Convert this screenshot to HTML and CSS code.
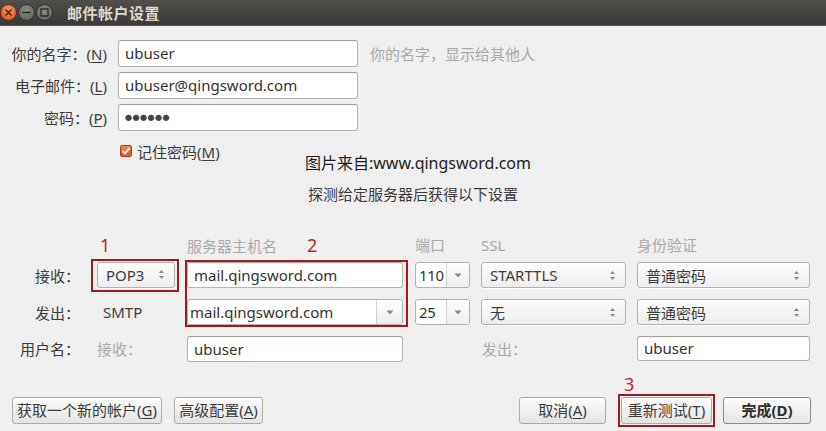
FILE: index.html
```html
<!DOCTYPE html>
<html lang="zh-CN">
<head>
<meta charset="utf-8">
<title>邮件帐户设置</title>
<link rel="stylesheet" href="styles.css">
</head>
<body>
<div class="titlebar">
  <div class="wbtns">
    <span class="wbtn close"><svg width="17" height="17" viewBox="0 0 17 17"><path d="M6 6 L11 11 M11 6 L6 11" stroke="#5a1d0b" stroke-width="1.6" stroke-linecap="round"/></svg></span>
    <span class="wbtn"><svg width="17" height="17" viewBox="0 0 17 17"><path d="M4.5 8.5 H12.5" stroke="#2d2d2a" stroke-width="1.6"/></svg></span>
    <span class="wbtn"><svg width="17" height="17" viewBox="0 0 17 17"><rect x="5" y="5" width="7" height="7" fill="none" stroke="#2d2d2a" stroke-width="1.4"/></svg></span>
  </div>
  <div class="wtitle">邮件帐户设置</div>
</div>

<div class="form">
  <div class="flabel">你的名字：(<u>N</u>)</div>
  <div class="entry">ubuser</div>
  <div class="hint">你的名字，显示给其他人</div>

  <div class="flabel">电子邮件：(<u>L</u>)</div>
  <div class="entry">ubuser@qingsword.com</div>
  <div></div>

  <div class="flabel">密码：(<u>P</u>)</div>
  <div class="entry pw">●●●●●●</div>
  <div></div>
</div>

<div class="mid">
  <div class="check">
    <svg class="cbox" width="12" height="12" viewBox="0 0 12 12">
      <defs><linearGradient id="cg" x1="0" y1="0" x2="0" y2="1"><stop offset="0" stop-color="#f2905a"/><stop offset="1" stop-color="#d6521f"/></linearGradient></defs>
      <rect x="0.5" y="0.5" width="11" height="11" rx="1.5" fill="url(#cg)" stroke="#a9401a"/>
      <path d="M2.8 6.2 L5 8.5 L9.4 3.2" fill="none" stroke="#fff" stroke-width="1.7"/>
    </svg>
    <span>记住密码(<u>M</u>)</span>
  </div>
  <div class="center">
    <div class="mark">图片来自:www.qingsword.com</div>
    <div class="probe">探测给定服务器后获得以下设置</div>
  </div>
  <div></div>
</div>

<div class="server">
  <div></div>
  <div class="ann a1">1</div>
  <div class="colhead">服务器主机名<span class="ann a2">2</span></div>
  <div class="colhead">端口</div>
  <div class="colhead">SSL</div>
  <div class="colhead">身份验证</div>

  <div class="rlabel">接收：</div>
  <div class="redbox r1"><div class="select pop"><span>POP3</span><svg class="updn" width="7" height="11" viewBox="0 0 7 11"><path d="M1 4 L3.5 1 L6 4 Z M1 7 L3.5 10 L6 7 Z" fill="#8a8a8a"/></svg></div></div>
  <div class="entry host h1">mail.qingsword.com</div>
  <div class="combo port"><span class="ctext">110</span><span class="cbtn"><svg width="8" height="5" viewBox="0 0 8 5"><path d="M0.5 0.5 L7.5 0.5 L4 4.5 Z" fill="#8a8a8a"/></svg></span></div>
  <div class="select ssl"><span>STARTTLS</span><svg class="updn" width="7" height="11" viewBox="0 0 7 11"><path d="M1 4 L3.5 1 L6 4 Z M1 7 L3.5 10 L6 7 Z" fill="#8a8a8a"/></svg></div>
  <div class="select auth"><span>普通密码</span><svg class="updn" width="7" height="11" viewBox="0 0 7 11"><path d="M1 4 L3.5 1 L6 4 Z M1 7 L3.5 10 L6 7 Z" fill="#8a8a8a"/></svg></div>

  <div class="rlabel">发出：</div>
  <div class="plain">SMTP</div>
  <div class="combo host h2"><span class="ctext">mail.qingsword.com</span><span class="cbtn"><svg width="8" height="5" viewBox="0 0 8 5"><path d="M0.5 0.5 L7.5 0.5 L4 4.5 Z" fill="#8a8a8a"/></svg></span></div>
  <div class="combo port"><span class="ctext">25</span><span class="cbtn"><svg width="8" height="5" viewBox="0 0 8 5"><path d="M0.5 0.5 L7.5 0.5 L4 4.5 Z" fill="#8a8a8a"/></svg></span></div>
  <div class="select ssl"><span>无</span><svg class="updn" width="7" height="11" viewBox="0 0 7 11"><path d="M1 4 L3.5 1 L6 4 Z M1 7 L3.5 10 L6 7 Z" fill="#8a8a8a"/></svg></div>
  <div class="select auth"><span>普通密码</span><svg class="updn" width="7" height="11" viewBox="0 0 7 11"><path d="M1 4 L3.5 1 L6 4 Z M1 7 L3.5 10 L6 7 Z" fill="#8a8a8a"/></svg></div>

  <div class="rlabel">用户名：</div>
  <div class="dim d1">接收：</div>
  <div class="entry host h3">ubuser</div>
  <div></div>
  <div class="dim d2">发出：</div>
  <div class="entry auth">ubuser</div>

  <div class="box2"></div>
</div>

<div class="actions">
  <div class="left">
    <div class="btn b-get">获取一个新的帐户(<u>G</u>)</div>
    <div class="btn b-adv">高级配置(<u>A</u>)</div>
  </div>
  <div class="right">
    <div class="btn b-cancel">取消(<u>A</u>)</div>
    <div class="redbox r3"><span class="ann a3">3</span><div class="btn b-retest">重新测试(<u>T</u>)</div></div>
    <div class="btn b-done">完成(<u>D</u>)</div>
  </div>
</div>
</body>
</html>
```

FILE: styles.css
```css
* { box-sizing: border-box; }
html, body { margin: 0; padding: 0; }
body {
  width: 826px;
  height: 431px;
  overflow: hidden;
  background: #efefef;
  font-family: "Noto Sans", "Noto Sans CJK SC", sans-serif;
  font-size: 15px;
  color: #3c3c3c;
  display: flex;
  flex-direction: column;
}
u { text-decoration: underline; text-underline-offset: 2px; }

/* title bar */
.titlebar {
  height: 26px;
  flex: none;
  background: linear-gradient(#4f4e4a, #3b3a36);
  border-bottom: 1px solid #5a5954;
  display: flex;
  align-items: center;
}
.wbtns { display: flex; gap: 1px; }
.wbtn {
  width: 17px; height: 17px; border-radius: 50%;
  background: radial-gradient(circle at 50% 35%, #8c8b86, #5e5d59);
  border: 1px solid #2f2e2b;
  display: flex; align-items: center; justify-content: center;
  overflow: hidden;
}
.wbtn svg { flex: none; margin: -1px; }
.wbtn.close { background: radial-gradient(circle at 50% 35%, #f79b6a, #d5461a); border-color: #6e2a10; }
.wtitle {
  margin-left: 14px;
  color: #dcd8cf;
  font-weight: bold;
  font-size: 15px;
  letter-spacing: 0.5px;
}

/* top form */
.form {
  margin-top: 14px;
  display: grid;
  grid-template-columns: 107px 240px auto;
  column-gap: 11px;
  row-gap: 5px;
  grid-auto-rows: 27px;
  align-items: center;
}
.flabel { text-align: right; white-space: nowrap; }
.hint { color: #a9a9a9; margin-left: 1px; }
.entry {
  height: 27px;
  line-height: 25px;
  background: #fff;
  border: 1px solid #b7b4ae;
  border-top-color: #a7a49e;
  border-radius: 3px;
  box-shadow: inset 0 1px 1px rgba(0,0,0,0.06);
  padding: 0 6px;
  color: #333;
  white-space: nowrap;
  overflow: hidden;
}
.entry.pw { font-size: 7px; letter-spacing: 0.5px; color: #444; }

/* middle */
.mid {
  margin-top: 10px;
  display: grid;
  grid-template-columns: 1fr auto 1fr;
}
.check {
  margin-left: 120px;
  display: flex;
  align-items: center;
  gap: 5px;
  height: 20px;
  white-space: nowrap;
}
.cbox { flex: none; }
.center { text-align: center; padding-top: 11px; }
.mark { font-size: 16px; line-height: 22px; color: #1e1e1e; margin-left: 10px; }
.probe { margin-top: 10px; line-height: 20px; color: #3c3c3c; }

/* server grid */
.server {
  margin-top: 31px;
  display: grid;
  grid-template-columns: 91px 96px 228px 66px 156px 172px;
  grid-template-rows: 20px 40px 34px 39px;
  align-items: center;
}
.colhead { color: #ababab; white-space: nowrap; line-height: 20px; }
.ann { color: #c0262d; font-size: 18px; line-height: 20px; }
.a1 { padding-left: 9px; }
.a2 { margin-left: 30px; }
.rlabel { text-align: right; padding-right: 11px; white-space: nowrap; }
.plain { padding-left: 12px; }
.dim { color: #ababab; }
.d1 { padding-left: 6px; }
.d2 { padding-left: 1px; }

.redbox { border: 2px solid #a01a22; }
.r1 { width: 88px; padding: 1px 2px 2px 4px; }

.select {
  height: 26px;
  border: 1px solid #b5b2ac;
  border-radius: 3px;
  background: linear-gradient(#fdfdfd, #ededed);
  box-shadow: 0 1px 0 rgba(255,255,255,0.8);
  display: flex;
  align-items: center;
  justify-content: space-between;
  padding: 0 9px 0 8px;
  white-space: nowrap;
}
.pop { width: 78px; }
.ssl { width: 145px; }
.auth { width: 173px; }
.entry.auth { height: 25px; line-height: 23px; }
.host { width: 216px; grid-column: 3; }
.h1 { grid-row: 2; }
.h2 { grid-row: 3; }
.h3 { grid-row: 4; }
.entry.host { height: 26px; line-height: 24px; }

.combo {
  height: 26px;
  border: 1px solid #b5b2ac;
  border-radius: 3px;
  background: #fff;
  display: flex;
  align-items: stretch;
  overflow: hidden;
}
.ctext { flex: 1; padding-left: 3px; line-height: 24px; white-space: nowrap; overflow: hidden; color: #333; }
.cbtn {
  flex: none;
  width: 23px;
  border-left: 1px solid #d2d0cb;
  background: linear-gradient(#fdfdfd, #ededed);
  display: flex;
  align-items: center;
  justify-content: center;
}
.combo.host .ctext { padding-left: 2px; }
.combo.host .cbtn { width: 26px; }
.port { width: 55px; }
.port .ctext { letter-spacing: -0.3px; }

.box2 {
  grid-column: 3;
  grid-row: 2 / 4;
  align-self: stretch;
  margin: 5px 0 2px -2px;
  width: 223px;
  border: 2px solid #a01a22;
}

/* bottom buttons */
.actions {
  margin-top: auto;
  margin-bottom: 4px;
  display: flex;
  justify-content: space-between;
  align-items: center;
  padding: 0 15px 0 12px;
}
.left, .right { display: flex; align-items: center; }
.btn {
  height: 27px;
  line-height: 25px;
  border: 1px solid #aeaba5;
  border-radius: 3px;
  background: linear-gradient(#fcfcfc, #e4e4e4);
  box-shadow: inset 0 1px 0 #fff;
  text-align: center;
  white-space: nowrap;
  color: #3c3c3c;
}
.b-get { width: 150px; }
.b-adv { width: 89px; margin-left: 12px; }
.b-cancel { width: 87px; }
.r3 { position: relative; padding: 1px; margin-left: 12px; }
.b-retest { width: 91px; }
.b-done { width: 88px; margin-left: 8px; font-weight: bold; color: #2e2e2e; border-color: #8f8c86; }
.a3 { position: absolute; left: 4px; top: -22px; }
```
